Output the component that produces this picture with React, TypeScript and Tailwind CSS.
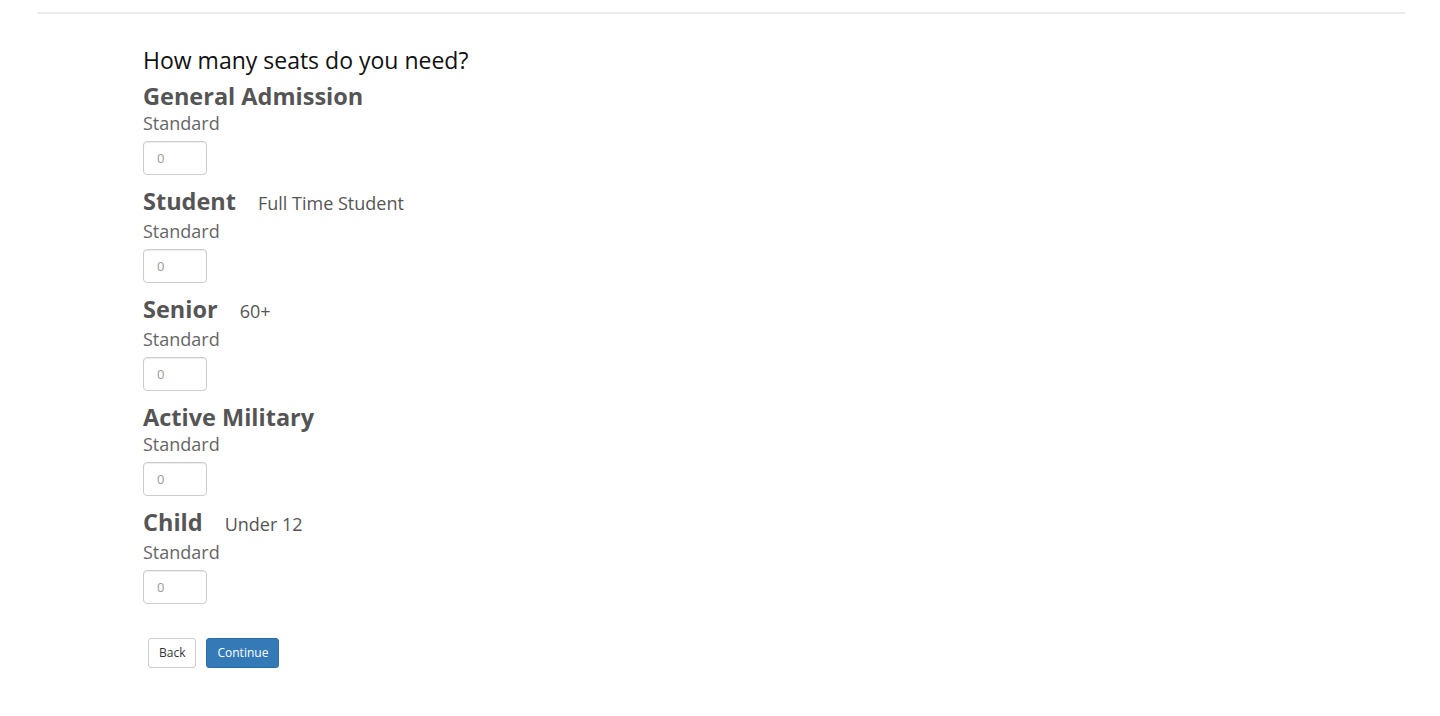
const tiers = [
  { name: "General Admission", note: "" },
  { name: "Student", note: "Full Time Student" },
  { name: "Senior", note: "60+" },
  { name: "Active Military", note: "" },
  { name: "Child", note: "Under 12" },
];

function Tier({ name, note }: { name: string; note: string }) {
  return (
    <div className="mb-[13px]">
      <div className={`flex items-baseline ${note ? "h-[30px]" : "h-[27px]"}`}>
        <h3 className="text-[23.5px] font-bold leading-[27px] text-[#555]">{name}</h3>
        {note && (
          <span className="ml-[22px] text-[18px] leading-[26px] text-[#555]">{note}</span>
        )}
      </div>
      <div className="h-[26px] text-[18px] leading-[26px] text-[#666]">Standard</div>
      <input
        type="text"
        placeholder="0"
        className="mt-[5px] block h-[34px] w-[64px] rounded-[4px] border border-[#ccc] px-[13px] text-[13px] text-[#555] placeholder:text-[#999] shadow-[inset_0_1px_1px_rgba(0,0,0,0.075)] outline-none"
      />
    </div>
  );
}

export default function App() {
  return (
    <div className="min-h-screen bg-white font-['Open_Sans',sans-serif]">
      <div className="pt-[12px] ml-[38px] mr-[35px] border-b-2 border-[#ebebeb]" />
      <main className="pl-[143px] pt-[30px]">
        <h2 className="text-[23px] leading-[32px] text-[#111] mb-[7px]">How many seats do you need?</h2>
        {tiers.map((t) => (
          <Tier key={t.name} name={t.name} note={t.note} />
        ))}
        <div className="flex gap-[10px] ml-[5px] mt-[34px]">
          <button className="h-[30px] px-[10px] rounded-[3px] border border-[#ccc] bg-white text-[12px] text-[#333]">
            Back
          </button>
          <button className="h-[30px] px-[10px] rounded-[3px] border border-[#2e6da4] bg-[#337ab7] text-[12px] text-white">
            Continue
          </button>
        </div>
      </main>
    </div>
  );
}
